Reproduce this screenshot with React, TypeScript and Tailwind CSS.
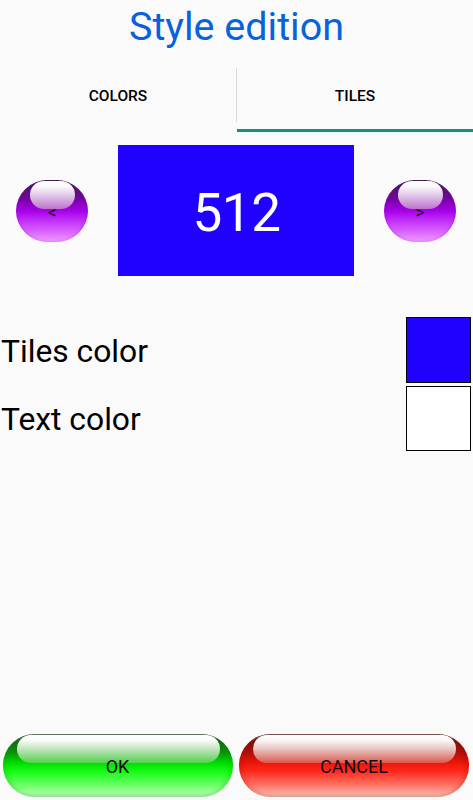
import React, { useState } from "react";
import clsx from "clsx";

const GLOSS_STYLES = {
  purple: {
    body: "bg-[linear-gradient(to_bottom,#3d1d4c_0%,#4d1768_12%,#7b00a8_32%,#a800ea_50%,#c02cfa_64%,#d860ff_82%,#f09cff_100%)] shadow-[inset_2px_0_3px_#8a00b828,inset_-2px_0_3px_#8a00b828]",
    shine:
      "bg-[linear-gradient(to_bottom,#ffffff_0%,#fbf8fc_20%,#e2cae9_50%,#bd73cf_100%)]",
    rim: "bg-[#39223f]",
  },
  green: {
    body: "bg-[linear-gradient(to_bottom,#526b4d_0%,#186418_12%,#079607_30%,#00de00_46%,#12fb12_58%,#66ff62_80%,#9bff96_92%,#bce8b7_100%)] shadow-[inset_4px_0_4px_#00990030,inset_-4px_0_4px_#00990030]",
    shine:
      "bg-[linear-gradient(to_bottom,#ffffff_0%,#f7fbf5_20%,#c1e4bc_50%,#52d24c_100%)]",
    rim: "bg-[#5b7556]",
  },
  red: {
    body: "bg-[linear-gradient(to_bottom,#704848_0%,#7c1510_12%,#b31008_30%,#ec160a_46%,#ff2618_58%,#ff7062_80%,#ffa095_92%,#eabfaf_100%)] shadow-[inset_4px_0_4px_#a6000030,inset_-4px_0_4px_#a6000030]",
    shine:
      "bg-[linear-gradient(to_bottom,#ffffff_0%,#faf5f4_20%,#e8c5c1_50%,#dc584e_100%)]",
    rim: "bg-[#795351]",
  },
};

type GlossButtonProps = {
  color: keyof typeof GLOSS_STYLES;
  label: string;
  small?: boolean;
  className?: string;
  onClick?: () => void;
};

const GlossButton = ({
  color,
  label,
  small,
  className,
  onClick,
}: GlossButtonProps) => {
  const styles = GLOSS_STYLES[color];

  return (
    <button
      type="button"
      onClick={onClick}
      className={clsx(
        "relative flex shrink-0 items-center justify-center overflow-hidden text-[#160b16]",
        small
          ? "h-[62px] w-[72px] rounded-[32px/31px] pt-[4px] text-[17px]"
          : "h-[63px] w-[230px] rounded-[32px/31px] pt-px text-[18px]",
        styles.body,
        className
      )}
    >
      <span
        className={clsx(
          "absolute top-px left-[14px] h-[28px] rounded-[14px]",
          small ? "w-[45px]" : "w-[203px]",
          styles.shine
        )}
      />
      <span
        className={clsx(
          "absolute top-0 h-px",
          small ? "left-[29px] w-[14px]" : "left-[30px] w-[171px]",
          styles.rim
        )}
      />
      <span className="relative">{label}</span>
    </button>
  );
};

type TabProps = {
  label: string;
  active: boolean;
  onClick: () => void;
};

const Tab = ({ label, active, onClick }: TabProps) => (
  <button
    type="button"
    onClick={onClick}
    className={clsx(
      "h-full flex-1 border-b-[3px] pt-[5px] text-[15.5px] font-medium text-black",
      active ? "border-[#13917f]" : "border-transparent"
    )}
  >
    {label}
  </button>
);

const App = () => {
  const [tab, setTab] = useState("tiles");
  const [exponent, setExponent] = useState(9);

  return (
    <div className="flex h-[800px] w-[473px] flex-col overflow-hidden bg-[#fafafa] font-['Roboto',sans-serif]">
      <h1 className="h-[60px] text-center text-[39.5px] leading-[54px] text-[#0862dc]">
        Style edition
      </h1>

      <div className="flex h-[72px]">
        <Tab
          label="COLORS"
          active={tab === "colors"}
          onClick={() => setTab("colors")}
        />
        <div className="mt-2 h-[54px] w-px bg-[#dadada]" />
        <Tab
          label="TILES"
          active={tab === "tiles"}
          onClick={() => setTab("tiles")}
        />
      </div>

      <div className="mt-[13px] flex h-[131px] items-center justify-between pr-[17px] pl-[16px]">
        <GlossButton
          color="purple"
          label="<"
          small
          onClick={() => setExponent(Math.max(1, exponent - 1))}
        />
        <div className="flex h-full w-[236px] items-center justify-center bg-[#2000ff] pt-[7px] pl-[1px] text-[53px] tracking-[-0.5px] text-white">
          {2 ** exponent}
        </div>
        <GlossButton
          color="purple"
          label=">"
          small
          onClick={() => setExponent(exponent + 1)}
        />
      </div>

      <div className="mt-[41px] flex flex-col gap-[3px] pr-[2px] pl-[1px] text-[31.8px] text-black">
        <div className="flex h-[66px] items-center justify-between">
          <p className="pt-[3px]">Tiles color</p>
          <div className="h-[66px] w-[65px] border border-black bg-[#2000ff]" />
        </div>
        <div className="flex h-[65px] items-center justify-between">
          <p className="pt-[2px]">Text color</p>
          <div className="h-[65px] w-[65px] border border-black bg-white" />
        </div>
      </div>

      <div className="mt-auto flex gap-[6.5px] pb-[3px] pl-[2.5px]">
        <GlossButton color="green" label="OK" />
        <GlossButton color="red" label="CANCEL" />
      </div>
    </div>
  );
};

export default App;
